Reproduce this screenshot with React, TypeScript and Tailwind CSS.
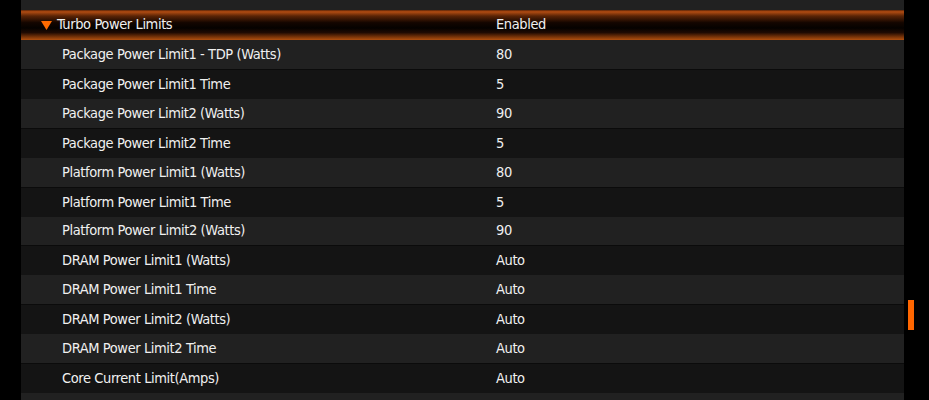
const rows = [
  { label: "Package Power Limit1 - TDP (Watts)", value: "80" },
  { label: "Package Power Limit1 Time", value: "5" },
  { label: "Package Power Limit2 (Watts)", value: "90" },
  { label: "Package Power Limit2 Time", value: "5" },
  { label: "Platform Power Limit1 (Watts)", value: "80" },
  { label: "Platform Power Limit1 Time", value: "5" },
  { label: "Platform Power Limit2 (Watts)", value: "90" },
  { label: "DRAM Power Limit1 (Watts)", value: "Auto" },
  { label: "DRAM Power Limit1 Time", value: "Auto" },
  { label: "DRAM Power Limit2 (Watts)", value: "Auto" },
  { label: "DRAM Power Limit2 Time", value: "Auto" },
  { label: "Core Current Limit(Amps)", value: "Auto" },
]

export default function App() {
  return (
    <div
      className="flex h-[400px] w-[929px] overflow-hidden bg-black text-[14.5px] tracking-[-0.4px] text-[#f0f0f0]"
      style={{ fontFamily: "'DejaVu Sans Condensed', Roboto, sans-serif" }}
    >
      <div className="w-[21px] shrink-0" />

      <div className="flex w-[883px] shrink-0 flex-col">
        <div className="h-[10px] shrink-0 bg-[#212121]" />

        {/* section header */}
        <div className="flex h-[30px] shrink-0 items-center bg-[linear-gradient(to_bottom,#5a2408_0%,#b24c12_6%,#5a2406_20%,#140600_42%,#050200_60%,#1e0a02_75%,#7a3408_90%,#b0500f_100%)]">
          <div className="flex w-[475px] items-center pl-[20px]">
            <svg width="11" height="9" viewBox="0 0 11 9" className="mr-[5px] mt-[1px]">
              <polygon points="0,0 11,0 5.5,9" fill="#ff6a00" />
            </svg>
            <span>Turbo Power Limits</span>
          </div>
          <span>Enabled</span>
        </div>

        {rows.map((row, i) => (
          <div
            key={row.label}
            className={
              i % 2 === 1
                ? "flex h-[30px] shrink-0 items-center border-t border-[#0b0b0b] bg-[#141414]"
                : i === 6
                  ? "flex h-[28px] shrink-0 items-center bg-[#212121]"
                  : "flex h-[29px] shrink-0 items-center bg-[#212121]"
            }
          >
            <span className="w-[475px] shrink-0 pl-[41px]">{row.label}</span>
            <span>{row.value}</span>
          </div>
        ))}

        <div className="h-[20px] shrink-0 bg-[#212121]" />
      </div>

      {/* scrollbar */}
      <div className="w-[25px] shrink-0 pl-[4px] pt-[300px]">
        <div className="h-[30px] w-[6px] bg-[#ff6600]" />
      </div>
    </div>
  )
}
